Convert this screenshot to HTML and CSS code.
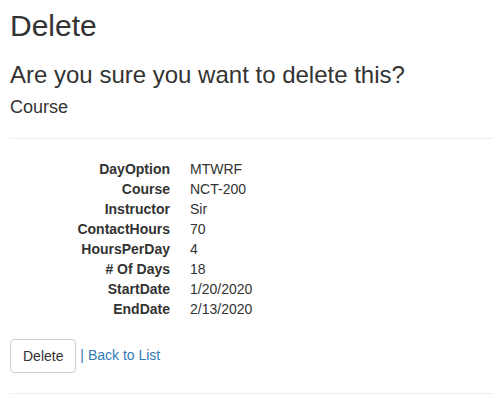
FILE: index.html
```html
<!DOCTYPE html>
<html>
<head>
<meta charset="utf-8">
<title>Delete</title>
<link rel="stylesheet" href="styles.css">
</head>
<body>
<div class="body-content">
  <h2 class="title">Delete</h2>
  <h3 class="question">Are you sure you want to delete this?</h3>
  <div class="details">
    <h4 class="entity">Course</h4>
    <hr class="rule">
    <dl class="dl-horizontal">
      <dt>DayOption</dt><dd>MTWRF</dd>
      <dt>Course</dt><dd>NCT-200</dd>
      <dt>Instructor</dt><dd>Sir</dd>
      <dt>ContactHours</dt><dd>70</dd>
      <dt>HoursPerDay</dt><dd>4</dd>
      <dt># Of Days</dt><dd>18</dd>
      <dt>StartDate</dt><dd>1/20/2020</dd>
      <dt>EndDate</dt><dd>2/13/2020</dd>
    </dl>
    <form class="form-actions">
      <button type="button" class="btn">Delete</button> <span class="sep">|</span> <a class="link" href="#">Back to List</a>
    </form>
  </div>
  <hr class="rule footer-rule">
</div>
</body>
</html>
```
FILE: styles.css
```css
html, body {
  margin: 0;
  padding: 0;
  background: #fff;
}
body {
  font-family: "Liberation Sans", Arial, Helvetica, sans-serif;
  font-size: 14px;
  line-height: 1.42857143;
  color: #333;
}
.body-content {
  padding: 9px 0 0 10px;
}
.title {
  font-size: 30px;
  font-weight: 500;
  line-height: 1.1;
  margin: 0 0 10px 0;
}
.question {
  font-size: 24px;
  font-weight: 500;
  line-height: 1.1;
  margin: 20px 0 10px 0;
}
.entity {
  font-size: 18px;
  font-weight: 500;
  line-height: 1.1;
  margin: 10px 0 10px 0;
}
.rule {
  margin: 20px 0;
  border: 0;
  border-top: 1px solid #eee;
  height: 0;
}
.dl-horizontal {
  display: grid;
  grid-template-columns: 160px 1fr;
  column-gap: 20px;
  margin: 0 0 20px 0;
}
.dl-horizontal dt {
  font-weight: 700;
  text-align: right;
  white-space: nowrap;
  line-height: 20px;
}
.dl-horizontal dd {
  margin: 0;
  line-height: 20px;
}
.form-actions {
  margin: 0;
}
.btn {
  display: inline-block;
  font-family: inherit;
  font-size: 14px;
  line-height: 20px;
  padding: 6px 12px;
  color: #333;
  background: #fff;
  border: 1px solid #ccc;
  border-radius: 4px;
  vertical-align: middle;
  margin: 0;
}
.sep, .link {
  color: #337ab7;
  text-decoration: none;
}
```
